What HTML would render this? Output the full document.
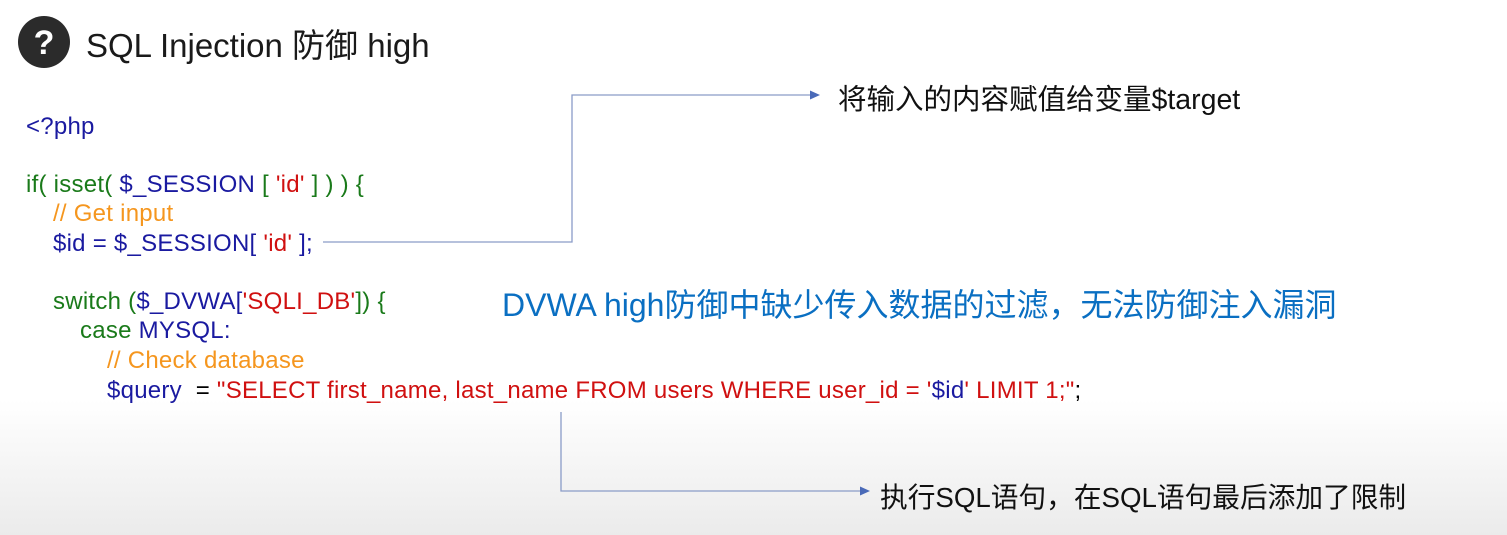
<!DOCTYPE html>
<html><head><meta charset="utf-8"><style>
*{margin:0;padding:0}
body{width:1507px;height:535px;overflow:hidden;position:relative;background:linear-gradient(to bottom,#fff 0,#fff 400px,#ebebeb 535px);font-family:"Liberation Sans","Noto Sans CJK SC",sans-serif}
.t{position:absolute;white-space:nowrap}
.c{position:absolute;white-space:nowrap;font-size:24px;line-height:26px;letter-spacing:0.25px}
.b{color:#1a1aa0}.g{color:#1a7a1a}.r{color:#d01010}.o{color:#f5961e}
</style></head><body>
<svg width="1507" height="535" style="position:absolute;left:0;top:0">
<circle cx="44" cy="42" r="26" fill="#2b2b2b"/>
<text x="44" y="54" text-anchor="middle" font-family="Liberation Sans" font-weight="bold" font-size="34" fill="#fff">?</text>
<polyline points="323,242 572,242 572,95 812,95" fill="none" stroke="#8a9cc8" stroke-width="1.3"/>
<polygon points="820,95 810,90.5 810,99.5" fill="#4a6ab8"/>
<polyline points="561,412 561,491 862,491" fill="none" stroke="#8a9cc8" stroke-width="1.3"/>
<polygon points="870,491 860,486.5 860,495.5" fill="#4a6ab8"/>
</svg>
<div class="t" style="left:86px;top:19px;font-size:33px;color:#1a1a1a">SQL Injection 防御 high</div>
<div class="c b" style="left:26px;top:114px">&lt;?php</div>
<div class="c" style="left:26px;top:172px"><span class="g">if( isset( </span><span class="b">$_SESSION</span><span class="g"> [ </span><span class="r">'id'</span><span class="g"> ] ) ) {</span></div>
<div class="c o" style="left:53px;top:201px">// Get input</div>
<div class="c b" style="left:53px;top:231px">$id = $_SESSION[ <span class="r">'id'</span> ];</div>
<div class="c" style="left:53px;top:289px"><span class="g">switch (</span><span class="b">$_DVWA[</span><span class="r">'SQLI_DB'</span><span class="g">]) {</span></div>
<div class="c" style="left:80px;top:318px"><span class="g">case </span><span class="b">MYSQL:</span></div>
<div class="c o" style="left:107px;top:348px">// Check database</div>
<div class="c" style="left:107px;top:378px"><span class="b">$query</span>&nbsp; = <span class="r">"SELECT first_name, last_name FROM users WHERE user_id = '<span class="b">$id</span>' LIMIT 1;"</span>;</div>
<div class="t" style="left:502px;top:280px;font-size:32px;color:#0a6fc2">DVWA high防御中缺少传入数据的过滤，无法防御注入漏洞</div>
<div class="t" style="left:838px;top:77px;font-size:28.5px;color:#111">将输入的内容赋值给变量$target</div>
<div class="t" style="left:880px;top:475px;font-size:27.7px;color:#111">执行SQL语句，在SQL语句最后添加了限制</div>
</body></html>
